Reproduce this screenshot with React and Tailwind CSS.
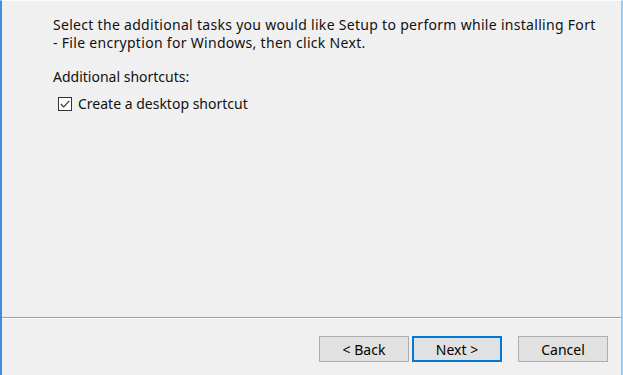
import React from "react";

const Btn = ({ children, primary }) => (
    <button
        className={`w-[90px] h-[26px] bg-[#e1e1e1] border ${primary ? "border-2 border-[#0078d7]" : "border-[#adadad]"} text-[14px] text-black flex items-center justify-center`}
    >
        {children}
    </button>
);

export default function App() {
    return (
        <div className="w-[623px] h-[375px] bg-[#f0f0f0] flex flex-col border-l-2 border-l-[#3c8fdc] border-r-2 border-r-[#99c9ef] border-t border-t-[#fbfbfb] text-[#111] font-['Segoe_UI','Noto_Sans',sans-serif] text-[14px] overflow-hidden">
            {/* Content */}
            <div className="flex-1 pl-[51px] pt-[15px]">
                <p className="leading-[18px] whitespace-nowrap tracking-[0.3px]">
                    Select the additional tasks you would like Setup to perform while installing Fort
                    <br />- File encryption for Windows, then click Next.
                </p>
                <p className="mt-[16px] leading-[18px]">Additional shortcuts:</p>
                <label className="mt-[9px] ml-[5px] flex items-center gap-[6px] leading-[18px]">
                    <span className="w-[14px] h-[14px] border border-[#333] bg-white flex items-center justify-center">
                        <svg width="12" height="12" viewBox="0 0 12 12">
                            <path d="M1.8 6 L4.7 8.9 L10.3 2.8" fill="none" stroke="#333" strokeWidth="1.1" />
                        </svg>
                    </span>
                    Create a desktop shortcut
                </label>
            </div>

            {/* Footer */}
            <div className="h-[58px] border-t border-t-[#a0a0a0] shadow-[inset_0_1px_0_#ffffff] flex items-start justify-end pt-[18px] pr-[13px]">
                <Btn>&lt; Back</Btn>
                <div className="ml-[3px]">
                    <Btn primary>Next &gt;</Btn>
                </div>
                <div className="ml-[16px]">
                    <Btn>Cancel</Btn>
                </div>
            </div>
        </div>
    );
}
